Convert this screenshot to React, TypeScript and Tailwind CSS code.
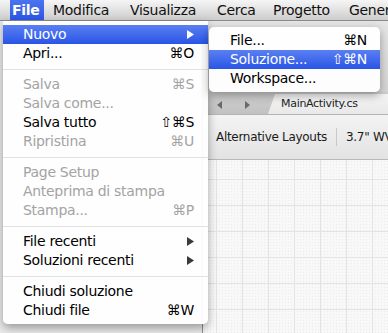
import React from "react";

type Item =
  | { sep: true }
  | { label: string; shortcut?: string; disabled?: boolean; sub?: boolean; active?: boolean };

const fileMenu: Item[] = [
  { label: "Nuovo", sub: true, active: true },
  { label: "Apri...", shortcut: "⌘O" },
  { sep: true },
  { label: "Salva", shortcut: "⌘S", disabled: true },
  { label: "Salva come...", disabled: true },
  { label: "Salva tutto", shortcut: "⇧⌘S" },
  { label: "Ripristina", shortcut: "⌘U", disabled: true },
  { sep: true },
  { label: "Page Setup", disabled: true },
  { label: "Anteprima di stampa", disabled: true },
  { label: "Stampa...", shortcut: "⌘P", disabled: true },
  { sep: true },
  { label: "File recenti", sub: true },
  { label: "Soluzioni recenti", sub: true },
  { sep: true },
  { label: "Chiudi soluzione" },
  { label: "Chiudi file", shortcut: "⌘W" },
];

const newMenu: Item[] = [
  { label: "File...", shortcut: "⌘N" },
  { label: "Soluzione...", shortcut: "⇧⌘N", active: true },
  { label: "Workspace..." },
];

const Arrow = ({ color }: { color: string }) => (
  <svg width="7" height="9" viewBox="0 0 7 9">
    <path d="M0 0 L7 4.5 L0 9 Z" fill={color} />
  </svg>
);

const MenuRow = ({ item, pl, pr }: { item: Item; pl: string; pr: string }) => {
  if ("sep" in item) {
    return (
      <div className="h-[12px] flex items-center">
        <div className="h-px w-full bg-[#e2e2e2]" />
      </div>
    );
  }
  const color = item.active
    ? "text-white bg-gradient-to-b from-[#5a7ff2] to-[#2a54e6]"
    : item.disabled
    ? "text-[#a3a3a3]"
    : "text-black";
  return (
    <div className={`h-[19px] flex items-center justify-between ${pl} ${pr} ${color}`}>
      <span>{item.label}</span>
      {item.shortcut && <span>{item.shortcut}</span>}
      {item.sub && <Arrow color={item.active ? "#ffffff" : "#3a3a3a"} />}
    </div>
  );
};

const MenuBar = () => (
  <div className="h-[21px] flex items-center overflow-hidden text-[14px] tracking-[-0.3px] text-[#111] whitespace-nowrap bg-gradient-to-b from-[#f6f6f6] to-[#cdcdcd] border-b border-[#8a8a8a]">
    <div className="shrink-0 ml-[10px] w-[34px] h-full pl-[2px] flex items-center font-bold text-white bg-gradient-to-b from-[#4c74f0] to-[#2c56e6]">
      File
    </div>
    <div className="shrink-0 ml-[9px] w-[77px]">Modifica</div>
    <div className="shrink-0 w-[87px]">Visualizza</div>
    <div className="shrink-0 w-[56px]">Cerca</div>
    <div className="shrink-0 w-[76px]">Progetto</div>
    <div className="shrink-0">Generale</div>
  </div>
);

const TabBar = () => (
  <div className="h-[23px] flex bg-gradient-to-b from-[#cfcfcf] to-[#c2c2c2] border-b border-[#b5b5b5]">
    <div className="shrink-0 w-[65px] flex items-center pt-[3px]">
      <div className="ml-[14px]">
        <svg width="5" height="8" viewBox="0 0 5 8">
          <path d="M5 0 L0 4 L5 8 Z" fill="#6a6a6a" />
        </svg>
      </div>
      <div className="ml-[23px]">
        <svg width="5" height="8" viewBox="0 0 5 8">
          <path d="M0 0 L5 4 L0 8 Z" fill="#6a6a6a" />
        </svg>
      </div>
    </div>
    <div className="flex-1 min-w-0 mt-[2px] pl-[13px] flex items-center text-[11px] tracking-[-0.3px] text-[#222] bg-gradient-to-b from-[#f4f4f4] to-[#e9e9e9] rounded-tl-[5px] [clip-path:polygon(7px_0,100%_0,100%_100%,0_100%)] whitespace-nowrap">
      MainActivity.cs
    </div>
  </div>
);

const Toolbar = () => (
  <div className="h-[45px] flex items-center overflow-hidden pl-[13px] text-[12px] tracking-[-0.3px] text-[#1a1a1a] bg-gradient-to-b from-[#f3f3f3] to-[#e3e3e3] border-b border-[#b9b9b9] whitespace-nowrap">
    <span className="shrink-0">Alternative Layouts</span>
    <div className="shrink-0 mx-[9px] w-px h-[18px] bg-[#c9c9c9]" />
    <span className="shrink-0">3.7" WVGA</span>
  </div>
);

export default function App() {
  return (
    <div className="relative w-[388px] h-[333px] overflow-hidden bg-[#e9e9e9] font-['DejaVu_Sans',sans-serif]">
      <MenuBar />
      <div className="flex h-[312px]">
        <div className="shrink-0 w-[203px] bg-[#ebebeb] border-r border-[#8d8d8d]" />
        <div className="flex-1 min-w-0 overflow-hidden flex flex-col">
          <div className="h-[71px] bg-gradient-to-b from-[#e6e6e6] to-[#d6d6d6]" />
          <TabBar />
          <Toolbar />
          <div className="flex-1 bg-[#f8f8f8] bg-[linear-gradient(to_right,#e3e3e3_1px,transparent_1px),linear-gradient(to_bottom,#e3e3e3_1px,transparent_1px),radial-gradient(#ececec_0.7px,transparent_0.8px)] bg-[size:26px_26px,26px_26px,3px_3px] bg-[position:13px_19px,13px_19px,0_0]" />
        </div>
      </div>

      {/* File menu */}
      <div className="absolute left-[3px] top-[21px] w-[205px] py-[4px] bg-white/95 rounded-b-[5px] shadow-[0_4px_10px_rgba(0,0,0,0.35)] text-[14px] tracking-[-0.3px] whitespace-nowrap">
        {fileMenu.map((it, i) => (
          <MenuRow key={i} item={it} pl="pl-[20px]" pr="pr-[14px]" />
        ))}
      </div>

      {/* Nuovo submenu */}
      <div className="absolute left-[209px] top-[27px] w-[171px] py-[4px] bg-white/95 rounded-[5px] shadow-[0_3px_10px_rgba(0,0,0,0.35)] text-[14px] tracking-[-0.3px] whitespace-nowrap">
        {newMenu.map((it, i) => (
          <MenuRow key={i} item={it} pl="pl-[21px]" pr="pr-[13px]" />
        ))}
      </div>
    </div>
  );
}
